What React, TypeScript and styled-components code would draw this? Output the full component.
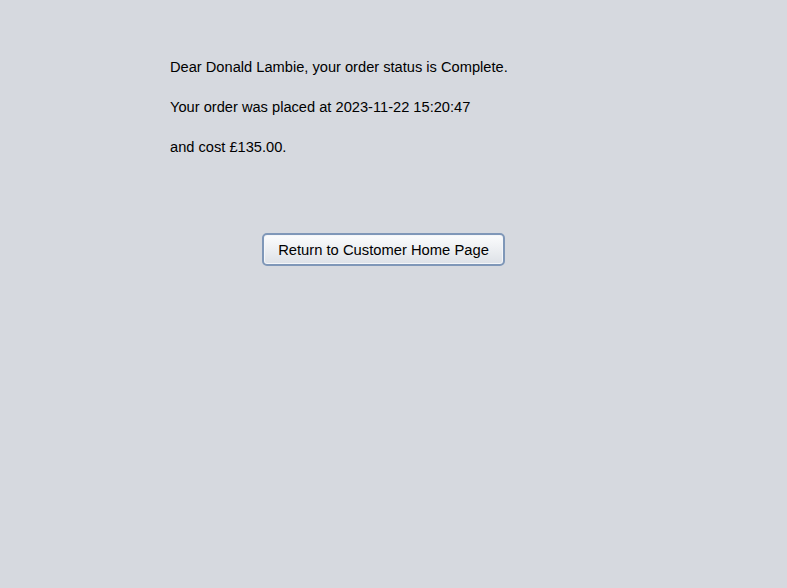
import React from 'react';
import styled, { createGlobalStyle } from 'styled-components';

const GlobalStyle = createGlobalStyle`
    html, body {
        margin: 0;
        padding: 0;
        background: #d6d9df;
    }
    body {
        font-family: "Liberation Sans", Arial, sans-serif;
        color: #000;
    }
`;

const Page = styled.div`
    width: 787px;
    height: 588px;
    box-sizing: border-box;
    padding: 47px 0 0 170px;
    display: flex;
    flex-direction: column;
`;

const Line = styled.p`
    margin: 0;
    height: 40px;
    line-height: 40px;
    font-size: 14.65px;
    white-space: nowrap;
`;

const ButtonRow = styled.div`
    margin-top: 66px;
    padding-left: 92px;
    display: flex;
`;

const Button = styled.button`
    width: 243px;
    height: 33px;
    box-sizing: border-box;
    border: 2px solid #7f97b8;
    border-radius: 5px;
    background: linear-gradient(to bottom, #fbfcfd 0%, #eef0f3 45%, #dde1e7 100%);
    box-shadow: inset 0 0 0 1px #f4f6f9;
    font-family: "Liberation Sans", Arial, sans-serif;
    font-size: 14.75px;
    color: #000;
    padding: 0;
    cursor: pointer;
`;

export default function App() {
    return (
        <>
            <GlobalStyle />
            <Page>
                <Line>Dear Donald Lambie, your order status is Complete.</Line>
                <Line>Your order was placed at 2023-11-22 15:20:47</Line>
                <Line>and cost £135.00.</Line>
                <ButtonRow>
                    <Button>Return to Customer Home Page</Button>
                </ButtonRow>
            </Page>
        </>
    );
}
